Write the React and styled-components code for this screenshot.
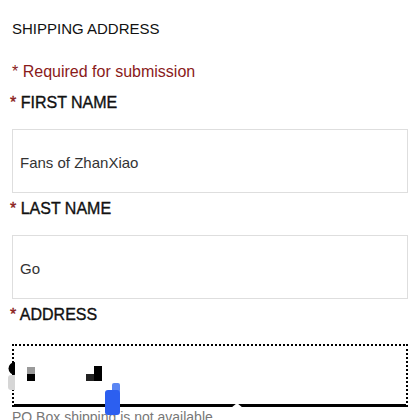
import React from 'react';
import styled, { createGlobalStyle } from 'styled-components';

const GlobalStyle = createGlobalStyle`
  html, body {
    margin: 0;
    padding: 0;
    background: #fff;
    overflow: hidden;
  }
  body {
    font-family: "Liberation Sans", Arial, sans-serif;
  }
`;

const Page = styled.div`
  display: flex;
  flex-direction: column;
  padding: 20px 12px 0;
`;

const Title = styled.h3`
  margin: 0;
  font-size: 15px;
  font-weight: normal;
  line-height: 18px;
  color: #111;
`;

const Required = styled.p`
  margin: 25px 0 0;
  font-size: 16px;
  line-height: 18px;
  color: #8a1a1a;
`;

const Fields = styled.div`
  display: flex;
  flex-direction: column;
  gap: 7px;
  margin-top: 13px;
`;

const FieldGroup = styled.div`
  display: flex;
  flex-direction: column;
  gap: ${p => p.gap || 17}px;
`;

const Star = styled.span`
  color: #8a1a1a;
  -webkit-text-stroke: 0.35px #8a1a1a;
`;

const Label = styled.div`
  margin-left: -2px;
  font-size: 16px;
  line-height: 18px;
  color: #111;
  -webkit-text-stroke: 0.35px #111;
`;

const Input = styled.div`
  box-sizing: border-box;
  height: 64px;
  border: 1px solid #dedede;
  display: flex;
  align-items: center;
  padding: 2px 7px 0;
  font-size: 15px;
  color: #333;
`;

const AddressBox = styled.div`
  position: relative;
  box-sizing: border-box;
  height: 63px;
  border: 2px dotted #000;
  border-bottom: 3px solid #000;
`;

const Notch = styled.span`
  position: absolute;
  left: 217px;
  bottom: -4px;
  width: 0;
  height: 0;
  border-left: 6px solid transparent;
  border-right: 6px solid transparent;
  border-bottom: 5px solid #fff;
`;

const Glitch = styled.svg`
  position: absolute;
  left: -6px;
  top: -2px;
  overflow: visible;
`;

const Hint = styled.p`
  margin: 2px 0 0;
  font-size: 14px;
  line-height: 16px;
  color: #777;
`;

const Field = ({ label, gap, children }) => (
  <FieldGroup gap={gap}>
    <Label>
      <Star>*</Star> {label}
    </Label>
    {children}
  </FieldGroup>
);

// leftover rendering artefacts drawn over the address field
const GlitchMarks = () => (
  <Glitch width="120" height="75" viewBox="0 0 120 75">
    <path d="M7 18 A6.5 6.5 0 0 0 7 31 Z" fill="#000" />
    <path d="M7 31 H3 A3 3 0 0 0 0 34 V43 A3 3 0 0 0 3 46 H7 Z" fill="#d6d6d6" />
    <rect x="19" y="23" width="8" height="7" fill="#9a9a9a" />
    <rect x="19" y="30" width="8" height="7" fill="#000" />
    <rect x="78" y="30" width="8" height="7" fill="#222" />
    <rect x="86" y="22" width="8" height="15" fill="#000" />
    <rect x="104" y="39" width="8" height="10" rx="2" fill="#5b86f3" />
    <rect x="97" y="46" width="15" height="25" rx="3" fill="#2c5ff0" />
  </Glitch>
);

const App = () => (
  <>
    <GlobalStyle />
    <Page>
      <Title>SHIPPING ADDRESS</Title>
      <Required>* Required for submission</Required>
      <Fields>
        <Field label="FIRST NAME">
          <Input>Fans of ZhanXiao</Input>
        </Field>
        <Field label="LAST NAME">
          <Input>Go</Input>
        </Field>
        <Field label="ADDRESS" gap={20}>
          <AddressBox>
            <GlitchMarks />
            <Notch />
          </AddressBox>
        </Field>
      </Fields>
      <Hint>PO Box shipping is not available</Hint>
    </Page>
  </>
);

export default App;
